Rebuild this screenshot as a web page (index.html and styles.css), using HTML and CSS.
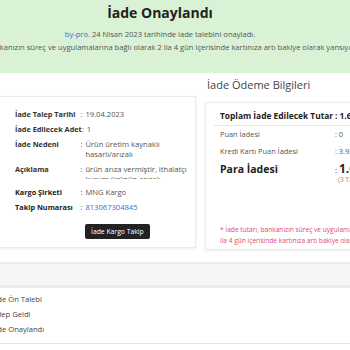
FILE: index.html
```html
<!DOCTYPE html>
<html lang="tr">
<head>
    <meta charset="UTF-8">
    <meta name="viewport" content="width=device-width, initial-scale=1.0">
    <title>İade Onaylandı</title>
    <link rel="stylesheet" href="styles.css">
</head>
<body>

<div class="banner">
    <div class="banner-inner">
        <h1>İade Onaylandı</h1>
        <p><a href="#">by-pro.</a> 24 Nisan 2023 tarihinde iade talebini onayladı.</p>
        <p>İade tutarı, bankanızın süreç ve uygulamalarına bağlı olarak 2 ila 4 gün içerisinde kartınıza artı bakiye olarak yansıyacaktır.</p>
    </div>
</div>

<div class="columns">
    <div class="col">
        <div class="card detail-card">
            <div class="row">
                <span class="label">İade Talep Tarihi</span>
                <span class="colon">:</span>
                <span class="value">19.04.2023</span>
            </div>
            <div class="row">
                <span class="label">İade Edilecek Adet</span>
                <span class="colon">:</span>
                <span class="value">1</span>
            </div>
            <div class="row">
                <span class="label">İade Nedeni</span>
                <span class="colon">:</span>
                <span class="value">Ürün üretim kaynaklı hasarlı/arızalı</span>
            </div>
            <div class="row row-cut">
                <span class="label">Açıklama</span>
                <span class="colon">:</span>
                <span class="value">ürün arıza vermiştir, ithalatçı kurum ürünün arızalı olduğunu onaylamıştır.</span>
            </div>
            <div class="row">
                <span class="label dark">Kargo Şirketi</span>
                <span class="colon">:</span>
                <span class="value">MNG Kargo</span>
            </div>
            <div class="row">
                <span class="label dark">Takip Numarası</span>
                <span class="colon">:</span>
                <span class="value"><a href="#">813067304845</a></span>
            </div>
            <button class="track-btn">İade Kargo Takip</button>
        </div>
    </div>

    <div class="col">
        <h3 class="col-title">İade Ödeme Bilgileri</h3>
        <div class="card pay-card">
            <div class="pay-row total">
                <span>Toplam İade Edilecek Tutar</span>
                <span class="amount">: 1.699,00 TL</span>
            </div>
            <div class="pay-row">
                <span>Puan İadesi</span>
                <span class="amount">: 0</span>
            </div>
            <div class="pay-row">
                <span>Kredi Kartı Puan İadesi</span>
                <span class="amount">: 3.930</span>
            </div>
            <div class="pay-row big">
                <span>Para İadesi</span>
                <span class="amount">: <b>1.699,00 TL</b><small>(3 Taksit)</small></span>
            </div>
            <p class="note">* İade tutarı, bankanızın süreç ve uygulamalarına bağlı olarak 2 ila 4 gün içerisinde kartınıza artı bakiye olarak yansıyacaktır.</p>
        </div>
    </div>
</div>

<div class="history">
    <div class="history-head"></div>
    <ul class="history-list">
        <li>İade Ön Talebi</li>
        <li>Talep Geldi</li>
        <li>İade Onaylandı</li>
    </ul>
</div>

</body>
</html>
```

FILE: styles.css
```css
body {
    margin: 0;
    font-family: "Open Sans", Arial, sans-serif;
    color: #555;
    background: #fff;
    overflow: hidden;
}
a {
    color: #3b6fd0;
    text-decoration: none;
}
.banner {
    background-color: #d9f1d4;
    height: 73px;
    overflow: hidden;
}
.banner-inner {
    width: 700px;
    margin-left: -190px;
    text-align: center;
    padding-top: 3px;
}
.banner h1 {
    font-size: 14px;
    color: #222;
    margin: 0 0 5px;
    line-height: 20px;
}
.banner p {
    font-size: 7.6px;
    line-height: 13px;
    margin: 0;
}
.columns {
    display: flex;
    gap: 9px;
    width: 420px;
    margin-top: 4px;
}
.col {
    width: 196px;
    flex-shrink: 0;
}
.col-title {
    font-size: 11px;
    font-weight: normal;
    color: #444;
    margin: 0 0 9px 2px;
    line-height: 16px;
}
.card {
    border: 1px solid #ebebeb;
    box-shadow: 0 1px 3px rgba(0, 0, 0, 0.07);
    background: #fff;
}
.detail-card {
    margin-top: 19px;
    height: 152px;
    padding: 12px 4px 0 15px;
    box-sizing: border-box;
    margin-left: -1px;
}
.row {
    display: flex;
    font-size: 7.6px;
    line-height: 10px;
    margin-bottom: 5px;
}
.row-cut {
    margin-bottom: 8px;
}
.row-cut .value {
    max-height: 15px;
    overflow: hidden;
}
.label {
    width: 65px;
    font-size: 7.3px;
    font-weight: bold;
    color: #333;
    white-space: nowrap;
}
.label.dark {
    color: #222;
}
.colon {
    width: 5px;
    padding-left: 2px;
}
.value {
    width: 108px;
}
.track-btn {
    margin: 2px 0 0 70px;
    padding: 0 6px;
    height: 15px;
    background-color: #222;
    color: #fff;
    border: none;
    border-radius: 2px;
    font-family: inherit;
    font-size: 6.8px;
    cursor: pointer;
}
.pay-card {
    width: 200px;
    height: 148px;
    padding: 6px 0 0 14px;
    box-sizing: border-box;
}
.pay-row {
    display: flex;
    font-size: 7.4px;
    line-height: 11px;
    margin-bottom: 6px;
}
.pay-row span:first-child {
    width: 115px;
    flex-shrink: 0;
}
.pay-row .amount {
    white-space: nowrap;
}
.pay-row.total {
    font-size: 8.4px;
    font-weight: bold;
    color: #222;
    border-bottom: 1px solid #e6e6e6;
    padding: 1px 0 4px 6px;
    margin: 0 0 3px -6px;
}
.pay-row.big {
    font-size: 10.5px;
    line-height: 12px;
    font-weight: bold;
    color: #222;
}
.pay-row.big .amount {
    font-weight: normal;
    font-size: 7.4px;
}
.pay-row.big b {
    font-size: 12px;
}
.pay-row.big small {
    display: block;
    font-size: 6.5px;
    line-height: 8px;
    color: #888;
    padding-left: 3px;
}
.note {
    margin: 40px 0 0;
    font-size: 6.6px;
    line-height: 11px;
    color: #e2476f;
    width: 198px;
}
.history {
    margin-top: 12px;
    width: 360px;
}
.history-head {
    height: 21px;
    background-color: #f5f5f5;
    border-top: 2px solid #ececec;
    border-bottom: 3px solid #ececec;
}
.history-list {
    list-style: none;
    margin: 0 0 0 -9px;
    padding: 4px 0 6px;
    border-bottom: 1px solid #e4e4e4;
}
.history-list li {
    font-size: 7.6px;
    line-height: 15px;
    color: #444;
}
```
